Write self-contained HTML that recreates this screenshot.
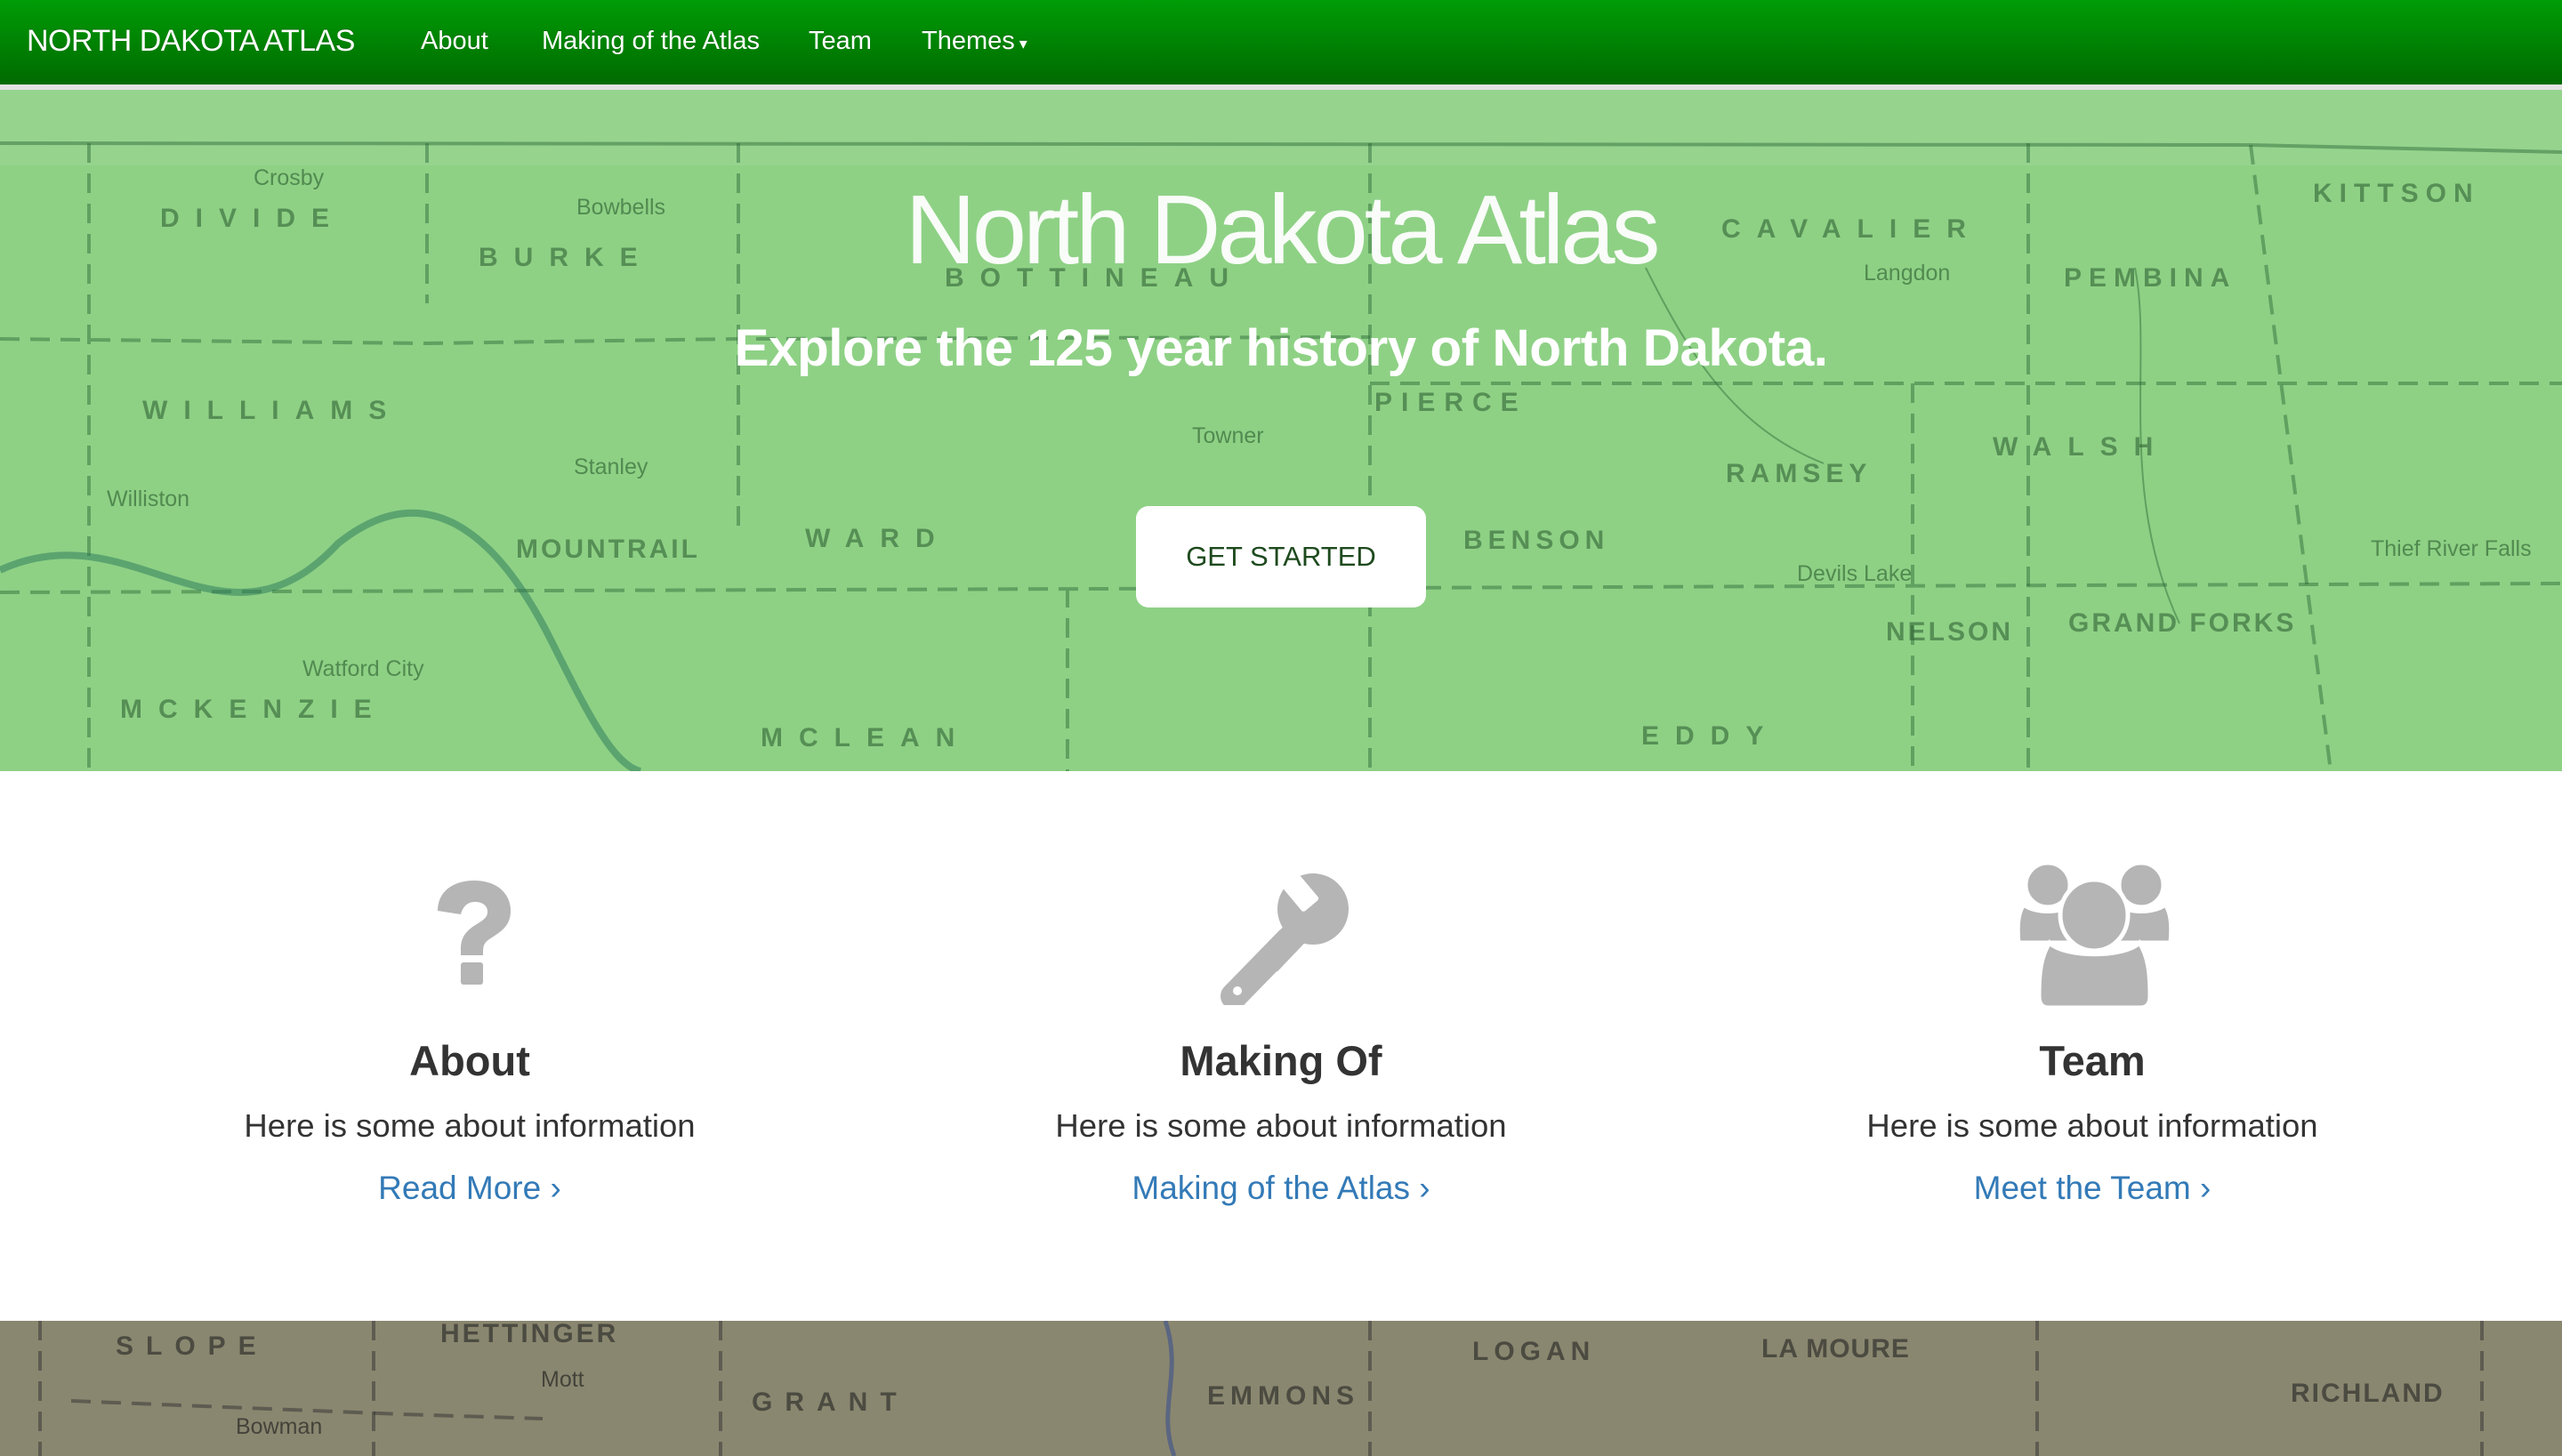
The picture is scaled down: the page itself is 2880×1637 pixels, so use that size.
<!DOCTYPE html>
<html><head><meta charset="utf-8"><style>
*{margin:0;padding:0;box-sizing:border-box}
body{width:2880px;height:1637px;overflow:hidden;font-family:"Liberation Sans",Arial,sans-serif;background:#fff;position:relative}
.nav{position:absolute;left:0;top:0;width:2880px;height:95px;background:linear-gradient(#009c06,#006a00);}
.sep{position:absolute;left:0;top:95px;width:2880px;height:6px;background:#e2e2e2}
.nav span{position:absolute;color:#fff;top:30px;font-size:29px;text-shadow:0 -1px 0 rgba(0,0,0,.25)}
.brand{font-size:34px!important;top:27px!important;left:30px;letter-spacing:-0.5px}
.hero{position:absolute;left:0;top:101px;width:2880px;height:766px;background:#8ed185;overflow:hidden}
.hero svg,.bot svg{position:absolute;left:0;top:0}
.title{position:absolute;left:0;width:2880px;text-align:center;top:195px;font-size:110px;color:#fff;letter-spacing:-4px;opacity:.95}
.sub{position:absolute;left:0;width:2880px;text-align:center;top:358px;font-size:58.5px;font-weight:bold;color:#fff;letter-spacing:-0.5px}
.btn{position:absolute;left:1277px;top:468px;width:326px;height:114px;background:#fff;border-radius:14px;color:#1e4a1e;font-size:31px;text-align:center;line-height:114px}
.col{position:absolute;top:950px;width:900px;height:450px;text-align:center}
.col h2{position:absolute;left:0;top:215px;width:100%;font-size:47px;font-weight:bold;color:#333}
.col p{position:absolute;left:0;top:295px;width:100%;font-size:36.5px;color:#333}
.col a{position:absolute;left:0;display:block;top:365px;width:100%;font-size:37px;color:#337ab7;text-decoration:none}
.bot{position:absolute;left:0;top:1485px;width:2880px;height:152px;background:#8a8770;overflow:hidden}
.lbl{position:absolute;font-size:30px;letter-spacing:18px;color:rgba(40,90,45,.55);font-weight:bold}
.sm{position:absolute;font-size:25px;color:rgba(40,90,45,.6)}
.bl{position:absolute;font-size:30px;letter-spacing:14px;color:rgba(50,50,45,.7);font-weight:bold}
</style></head><body>
<div class="nav">
<span class="brand">NORTH DAKOTA ATLAS</span>
<span style="left:473px">About</span>
<span style="left:609px">Making of the Atlas</span>
<span style="left:909px">Team</span>
<span style="left:1036px">Themes<small style="font-size:18px"> ▾</small></span>
</div>
<div class="sep"></div>
<div class="hero">
<svg width="2880" height="766" fill="none" stroke="rgba(40,100,50,.45)" stroke-width="4">
<rect x="0" y="0" width="2880" height="85" fill="rgba(255,255,255,.08)" stroke="none"/>
<path d="M0 60 L2530 62 L2880 70" />
<path d="M100 60 V766 M480 60 V240 M830 60 V500 M1540 60 V766 M2280 60 V766 M2530 62 L2620 766" stroke-dasharray="22 12"/>
<path d="M0 280 L480 285 L830 280 L1540 278 M0 565 L1540 560 L2880 555 M1540 330 L2880 330 M2150 330 V766 M1200 560 V766" stroke-dasharray="22 12"/>
<path d="M0 540 C150 470 250 650 380 510 C480 430 560 500 620 620 C660 700 690 760 720 766" stroke="rgba(40,120,90,.5)" stroke-width="8"/>
<path d="M1850 200 C1900 300 1950 380 2050 420 M2400 200 C2420 300 2380 450 2450 600" stroke-width="2"/>
</svg>
<div class="lbl" style="left:180px;top:128px">DIVIDE</div>
<div class="lbl" style="left:538px;top:172px">BURKE</div>
<div class="lbl" style="left:160px;top:344px">WILLIAMS</div>
<div class="lbl" style="left:580px;top:500px;letter-spacing:3px">MOUNTRAIL</div>
<div class="lbl" style="left:905px;top:488px">WARD</div>
<div class="lbl" style="left:135px;top:680px">MCKENZIE</div>
<div class="lbl" style="left:855px;top:712px">MCLEAN</div>
<div class="lbl" style="left:1062px;top:195px">BOTTINEAU</div>
<div class="lbl" style="left:1935px;top:140px">CAVALIER</div>
<div class="lbl" style="left:2320px;top:195px;letter-spacing:8px">PEMBINA</div>
<div class="lbl" style="left:1545px;top:335px;letter-spacing:10px">PIERCE</div>
<div class="lbl" style="left:1940px;top:415px;letter-spacing:6px">RAMSEY</div>
<div class="lbl" style="left:2240px;top:385px">WALSH</div>
<div class="lbl" style="left:1645px;top:490px;letter-spacing:6px">BENSON</div>
<div class="lbl" style="left:2120px;top:593px;letter-spacing:3px">NELSON</div>
<div class="lbl" style="left:2325px;top:583px;letter-spacing:3px">GRAND FORKS</div>
<div class="lbl" style="left:1845px;top:710px">EDDY</div>
<div class="lbl" style="left:2600px;top:100px;letter-spacing:8px">KITTSON</div>
<div class="sm" style="left:285px;top:85px">Crosby</div>
<div class="sm" style="left:648px;top:118px">Bowbells</div>
<div class="sm" style="left:120px;top:446px">Williston</div>
<div class="sm" style="left:645px;top:410px">Stanley</div>
<div class="sm" style="left:340px;top:637px">Watford City</div>
<div class="sm" style="left:1340px;top:375px">Towner</div>
<div class="sm" style="left:2095px;top:192px">Langdon</div>
<div class="sm" style="left:2020px;top:530px">Devils Lake</div>
<div class="sm" style="left:2665px;top:502px">Thief River Falls</div>
</div>
<div class="title">North Dakota Atlas</div>
<div class="sub">Explore the 125 year history of North Dakota.</div>
<div style="position:absolute;top:101px;left:0"><div class="btn">GET STARTED</div></div>

<div class="col" style="left:78px">
<svg style="position:absolute;left:410px;top:40px" width="90" height="120" viewBox="0 0 90 120"><path d="M4 34 C4 12 22 0 45 0 C70 0 86 14 86 34 C86 52 74 58 62 66 C56 70 55 74 55 80 L55 84 L30 84 L30 76 C30 64 36 56 48 49 C58 43 60 40 60 35 C60 28 54 24 46 24 C37 24 32 30 30 38 Z" fill="#b5b5b5"/><rect x="30" y="92" width="25" height="25" rx="3" fill="#b5b5b5"/></svg>
<h2>About</h2><p>Here is some about information</p><a>Read More ›</a></div>

<div class="col" style="left:990px">
<svg style="position:absolute;left:375px;top:30px" width="160" height="150" viewBox="0 0 160 150">
<line x1="100" y1="60" x2="22" y2="140" stroke="#b5b5b5" stroke-width="30" stroke-linecap="round"/>
<circle cx="111" cy="42" r="42" fill="#b5b5b5" stroke="#fff" stroke-width="4"/>
<line x1="100" y1="60" x2="60" y2="102" stroke="#b5b5b5" stroke-width="30"/>
<g transform="rotate(-40 111 42)"><rect x="100" y="-10" width="24" height="48" rx="3" fill="#fff"/></g>
<circle cx="26" cy="134" r="5" fill="#fff"/></svg>
<h2>Making Of</h2><p>Here is some about information</p><a>Making of the Atlas ›</a></div>

<div class="col" style="left:1902px">
<svg style="position:absolute;left:365px;top:15px" width="175" height="170" viewBox="0 0 175 170">
<g fill="#b5b5b5" stroke="#fff" stroke-width="5">
<path d="M2 95 C0 75 2 60 8 52 C20 62 50 62 62 52 L62 95 Z"/><path d="M173 95 C175 75 173 60 167 52 C155 62 125 62 113 52 L113 95 Z"/>
<circle cx="35" cy="30" r="25"/><circle cx="140" cy="30" r="25"/>
<path d="M36 168 H139 C146 168 150 164 150 155 C150 130 148 110 138 95 C120 112 55 112 37 95 C27 110 25 130 25 155 C25 164 29 168 36 168 Z"/>
<ellipse cx="87" cy="64" rx="38" ry="40"/></g></svg>
<h2>Team</h2><p>Here is some about information</p><a>Meet the Team ›</a></div>

<div class="bot">
<svg width="2880" height="152" fill="none" stroke="rgba(50,50,50,.5)" stroke-width="4">
<path d="M45 0 V152 M420 0 V152 M810 0 V152 M1540 0 V152 M2290 0 V152 M2790 0 V152" stroke-dasharray="22 12"/>
<path d="M80 90 L450 105 L610 110" stroke-dasharray="22 12"/>
<path d="M1310 0 C1330 60 1300 100 1320 152" stroke="rgba(60,80,140,.6)" stroke-width="5"/>
</svg>
<div class="bl" style="left:130px;top:12px">SLOPE</div>
<div class="bl" style="left:495px;top:-2px;letter-spacing:3px">HETTINGER</div>
<div class="bl" style="left:845px;top:75px">GRANT</div>
<div class="bl" style="left:1357px;top:68px;letter-spacing:6px">EMMONS</div>
<div class="bl" style="left:1655px;top:18px;letter-spacing:6px">LOGAN</div>
<div class="bl" style="left:1980px;top:15px;letter-spacing:1px">LA MOURE</div>
<div class="bl" style="left:2575px;top:65px;letter-spacing:2px">RICHLAND</div>
<div class="sm" style="left:265px;top:105px;color:rgba(50,50,45,.8)">Bowman</div>
<div class="sm" style="left:608px;top:52px;color:rgba(50,50,45,.8)">Mott</div>
</div>
</body></html>
